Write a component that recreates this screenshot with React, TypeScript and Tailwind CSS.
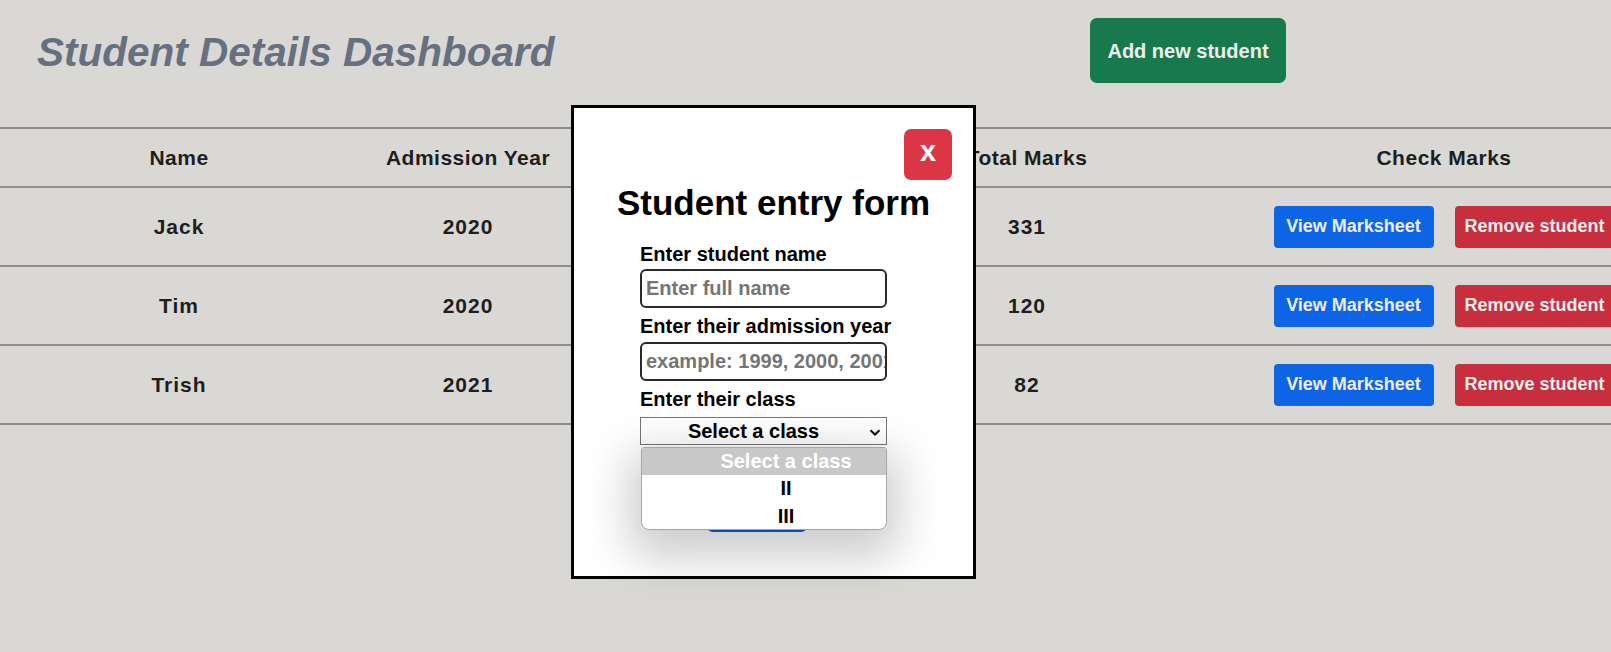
import React from 'react';

interface Student {
  name: string;
  year: number;
  total: number;
}

const students: Student[] = [
  { name: 'Jack', year: 2020, total: 331 },
  { name: 'Tim', year: 2020, total: 120 },
  { name: 'Trish', year: 2021, total: 82 },
];

const cols = 'grid grid-cols-[358px_220px_218px_462px_372px] w-[1630px] items-center text-center';

const StudentForm = () => (
  <div className="absolute left-[571px] top-[105px] w-[405px] h-[474px] border-[3px] border-black bg-white">
    <button className="absolute left-[330px] top-[21px] w-[48px] h-[51px] rounded-[7px] bg-[#dc3545] text-white text-[29px] font-bold leading-none pb-[6px]">
      x
    </button>
    <div className="flex flex-col pt-[75px]">
      <h2 className="text-center text-[35px] leading-[40px] font-bold text-black">Student entry form</h2>
      <div className="relative ml-[66px] mt-[20px] w-[247px] flex flex-col">
        <label className="text-[20px] leading-[22px] font-bold text-black whitespace-nowrap">Enter student name</label>
        <input
          placeholder="Enter full name"
          className="mt-[4px] h-[39px] w-[247px] rounded-[6px] border-2 border-[#2a2a2a] px-[4px] text-[20px] font-bold placeholder:text-[#757575]"
        />
        <label className="mt-[7px] text-[20px] leading-[22px] font-bold text-black whitespace-nowrap">
          Enter their admission year
        </label>
        <input
          placeholder="example: 1999, 2000, 2001"
          className="mt-[5px] h-[39px] w-[247px] rounded-[6px] border-2 border-[#2a2a2a] pl-[4px] pr-0 text-[20px] font-bold placeholder:text-[#757575]"
        />
        <label className="mt-[7px] text-[20px] leading-[22px] font-bold text-black whitespace-nowrap">Enter their class</label>
        <div className="relative mt-[7px] h-[28px] w-[247px] border border-[#767676] flex items-center">
          <span className="flex-1 pr-[20px] text-center text-[20px] font-bold text-black leading-none">Select a class</span>
          <svg className="absolute right-[5px] top-[11px]" width="12" height="7" viewBox="0 0 12 7" fill="none">
            <path d="M1.5 1.2 L6 5.5 L10.5 1.2" stroke="#111" strokeWidth="2" />
          </svg>
        </div>
        {/* submit button, covered by the open list */}
        <button aria-label="Submit" className="mt-[47px] ml-[67px] h-[40px] w-[100px] rounded-[6px] bg-[#0b5ed7]" />
        {/* open native dropdown list */}
        <div className="absolute left-[1px] top-[204px] w-[246px] h-[83px] rounded-b-[8px] rounded-t-[3px] border border-[#a5a5a5] bg-white overflow-hidden shadow-[0_16px_46px_12px_rgba(0,0,0,0.2)]">
          <div className="h-[27px] bg-[#c8c8c8] pl-[44px] text-center text-[20px] leading-[27px] font-bold text-white">
            Select a class
          </div>
          <div className="h-[27px] pl-[44px] text-center text-[20px] leading-[27px] font-bold text-black">II</div>
          <div className="h-[28px] pl-[44px] text-center text-[20px] leading-[28px] font-bold text-black">III</div>
        </div>
      </div>
    </div>
  </div>
);

export default function App() {
  return (
    <div className="relative w-full h-[652px] overflow-hidden bg-[#d9d8d4] font-['Liberation_Sans',Arial,sans-serif]">
      <header className="grid grid-cols-[1090px_auto] pt-[18px] h-[127px] items-start">
        <h1 className="pl-[37px] pt-[3px] h-[65px] flex items-center text-[40.5px] leading-none font-bold italic text-[#66707f]">
          Student Details Dashboard
        </h1>
        <button className="w-[196px] h-[65px] rounded-[7px] bg-[#177a4c] text-[20px] font-bold text-[#eeeeee]">
          Add new student
        </button>
      </header>

      <div className="border-t-2 border-[#8e8e8e] w-[1630px]">
        <div className={`${cols} h-[59px] border-b-2 border-[#8e8e8e] text-[21px] font-bold tracking-[0.5px] text-[#1e1e1e]`}>
          <div>Name</div>
          <div>Admission Year</div>
          <div>Class</div>
          <div>Total Marks</div>
          <div>Check Marks</div>
        </div>
        {students.map((s) => (
          <div
            key={s.name}
            className={`${cols} h-[79px] border-b-2 border-[#8e8e8e] text-[21px] font-bold tracking-[1px] text-[#1e1e1e]`}
          >
            <div>{s.name}</div>
            <div>{s.year}</div>
            <div />
            <div>{s.total}</div>
            <div className="flex justify-center gap-[21px] tracking-normal">
              <button className="w-[160px] h-[42px] rounded-[4px] bg-[#0d64e4] text-[18px] font-bold text-[#eeeeee]">
                View Marksheet
              </button>
              <button className="w-[160px] h-[42px] rounded-[4px] bg-[#c72f3e] text-[18px] font-bold text-[#eeeeee]">
                Remove student
              </button>
            </div>
          </div>
        ))}
      </div>

      <StudentForm />
    </div>
  );
}
